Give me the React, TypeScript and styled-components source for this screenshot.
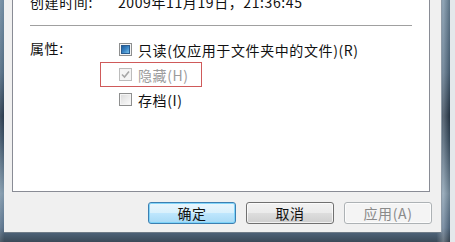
import React from "react";
import styled, { createGlobalStyle } from "styled-components";

const Global = createGlobalStyle`
  html, body { margin: 0; padding: 0; overflow: hidden; background: #dde2e6; }
  * { box-sizing: border-box; }
`;

const FONT = `"Noto Sans CJK SC", "Liberation Sans", sans-serif`;

const Screen = styled.div`
  width: 455px;
  height: 242px;
  display: flex;
  background: #e4e8eb;
  overflow: hidden;
  font-family: ${FONT};
  font-size: 14px;
  color: #111;
`;

const Frame = styled.div`
  width: 450px;
  height: 242px;
  display: flex;
  flex-direction: column;
  padding: 0 8px 9px 4px;
  background:
    linear-gradient(90deg, rgba(255,255,255,0.12) 0%, rgba(0,0,0,0) 1%, rgba(0,0,0,0) 97%, rgba(255,255,255,0.25) 98.5%, rgba(0,0,0,0.15) 100%),
    linear-gradient(180deg, #6c879d 0%, #4e687f 30%, #27384a 48%, #3a5064 58%, #7d95a8 80%, #57708a 94%, #3b4a58 100%);
`;

const Dialog = styled.div`
  flex: 1;
  display: flex;
  flex-direction: column;
  background: #f0f0f0;
  border-right: 1px solid #8e9aa6;
  border-bottom: 1px solid #6f7c88;
  padding: 0 9px 8px 8px;
`;

const Panel = styled.div`
  height: 192px;
  margin-right: 2px;
  background: #ffffff;
  border: 1px solid #898c95;
  border-top: none;
  padding: 0 17px 0 17px;
  display: flex;
  flex-direction: column;
`;

const InfoRow = styled.div`
  display: grid;
  grid-template-columns: 88px 1fr;
  margin-top: -6px;
  line-height: 16px;
  letter-spacing: 0.6px;
`;

const Separator = styled.div`
  height: 1px;
  background: #a0a0a0;
  margin-top: 15px;
`;

const AttrSection = styled.div`
  display: grid;
  grid-template-columns: 88px 1fr;
  margin-top: 11px;
`;

const Label = styled.div`
  line-height: 16px;
  letter-spacing: 0.6px;
  padding-top: 3px;
`;

const OptionList = styled.div`
  display: flex;
  flex-direction: column;
`;

const Option = styled.div<{ $disabled?: boolean }>`
  position: relative;
  height: 25px;
  display: flex;
  align-items: center;
  gap: 6px;
  color: ${(p) => (p.$disabled ? "#9c9c9c" : "#111")};
  letter-spacing: 0.6px;
  line-height: 16px;
`;

const Highlight = styled.div`
  position: absolute;
  left: -18px;
  top: 0;
  width: 102px;
  height: 25px;
  border: 1.5px solid #cf5a5a;
  pointer-events: none;
`;

const Box = styled.span<{ $disabled?: boolean }>`
  width: 13px;
  height: 13px;
  flex: none;
  display: flex;
  align-items: center;
  justify-content: center;
  border: 1px solid ${(p) => (p.$disabled ? "#bcbcbc" : "#8e8f8f")};
  background: ${(p) =>
    p.$disabled
      ? "#f4f4f4"
      : "linear-gradient(135deg, #d9d9d9 0%, #ededed 55%, #fbfbfb 100%)"};
  box-shadow: inset 0 0 0 1px ${(p) => (p.$disabled ? "#f4f4f4" : "#f4f4f4")};
  margin-left: 1px;
`;

const MixedFill = styled.span`
  width: 9px;
  height: 9px;
  border: 1px solid #2b5c8f;
  background: linear-gradient(135deg, #1f5d9c 0%, #3a84c4 50%, #76c1ec 100%);
`;

const Buttons = styled.div`
  margin-top: 10px;
  display: flex;
  justify-content: flex-end;
  gap: 10px;
`;

const Button = styled.div<{ $variant: "default" | "normal" | "disabled" }>`
  width: 88px;
  height: 22px;
  border-radius: 3px;
  display: flex;
  align-items: center;
  justify-content: center;
  font-size: 14px;
  letter-spacing: 0.6px;
  line-height: 16px;
  border: 1px solid
    ${(p) =>
      p.$variant === "default" ? "#3c7fb1" : p.$variant === "normal" ? "#707070" : "#adb2b5"};
  color: ${(p) => (p.$variant === "disabled" ? "#8a8a8a" : "#111")};
  background: ${(p) =>
    p.$variant === "default"
      ? "linear-gradient(180deg, #eaf6fd 0%, #d9f0fc 48%, #bee6fd 52%, #a7d9f5 100%)"
      : p.$variant === "normal"
      ? "linear-gradient(180deg, #f2f2f2 0%, #ebebeb 48%, #dddddd 52%, #cfcfcf 100%)"
      : "#f4f4f4"};
  box-shadow: inset 0 0 0 1px
    ${(p) => (p.$variant === "default" ? "rgba(120,210,250,0.9)" : "rgba(255,255,255,0.7)")};
`;

function CheckMark() {
  return (
    <svg width="9" height="9" viewBox="0 0 9 9">
      <path d="M1 4.5 L3.5 7 L8 1.5" fill="none" stroke="#a6a6a6" strokeWidth="1.6" />
    </svg>
  );
}

export default function App() {
  return (
    <>
      <Global />
      <Screen>
        <Frame>
          <Dialog>
            <Panel>
              <InfoRow>
                <span>创建时间:</span>
                <span>2009年11月19日，21:36:45</span>
              </InfoRow>
              <Separator />
              <AttrSection>
                <Label>属性:</Label>
                <OptionList>
                  <Option>
                    <Box>
                      <MixedFill />
                    </Box>
                    <span>只读(仅应用于文件夹中的文件)(R)</span>
                  </Option>
                  <Option $disabled>
                    <Highlight />
                    <Box $disabled>
                      <CheckMark />
                    </Box>
                    <span>隐藏(H)</span>
                  </Option>
                  <Option>
                    <Box />
                    <span>存档(I)</span>
                  </Option>
                </OptionList>
              </AttrSection>
            </Panel>
            <Buttons>
              <Button $variant="default">确定</Button>
              <Button $variant="normal">取消</Button>
              <Button $variant="disabled">应用(A)</Button>
            </Buttons>
          </Dialog>
        </Frame>
      </Screen>
    </>
  );
}
